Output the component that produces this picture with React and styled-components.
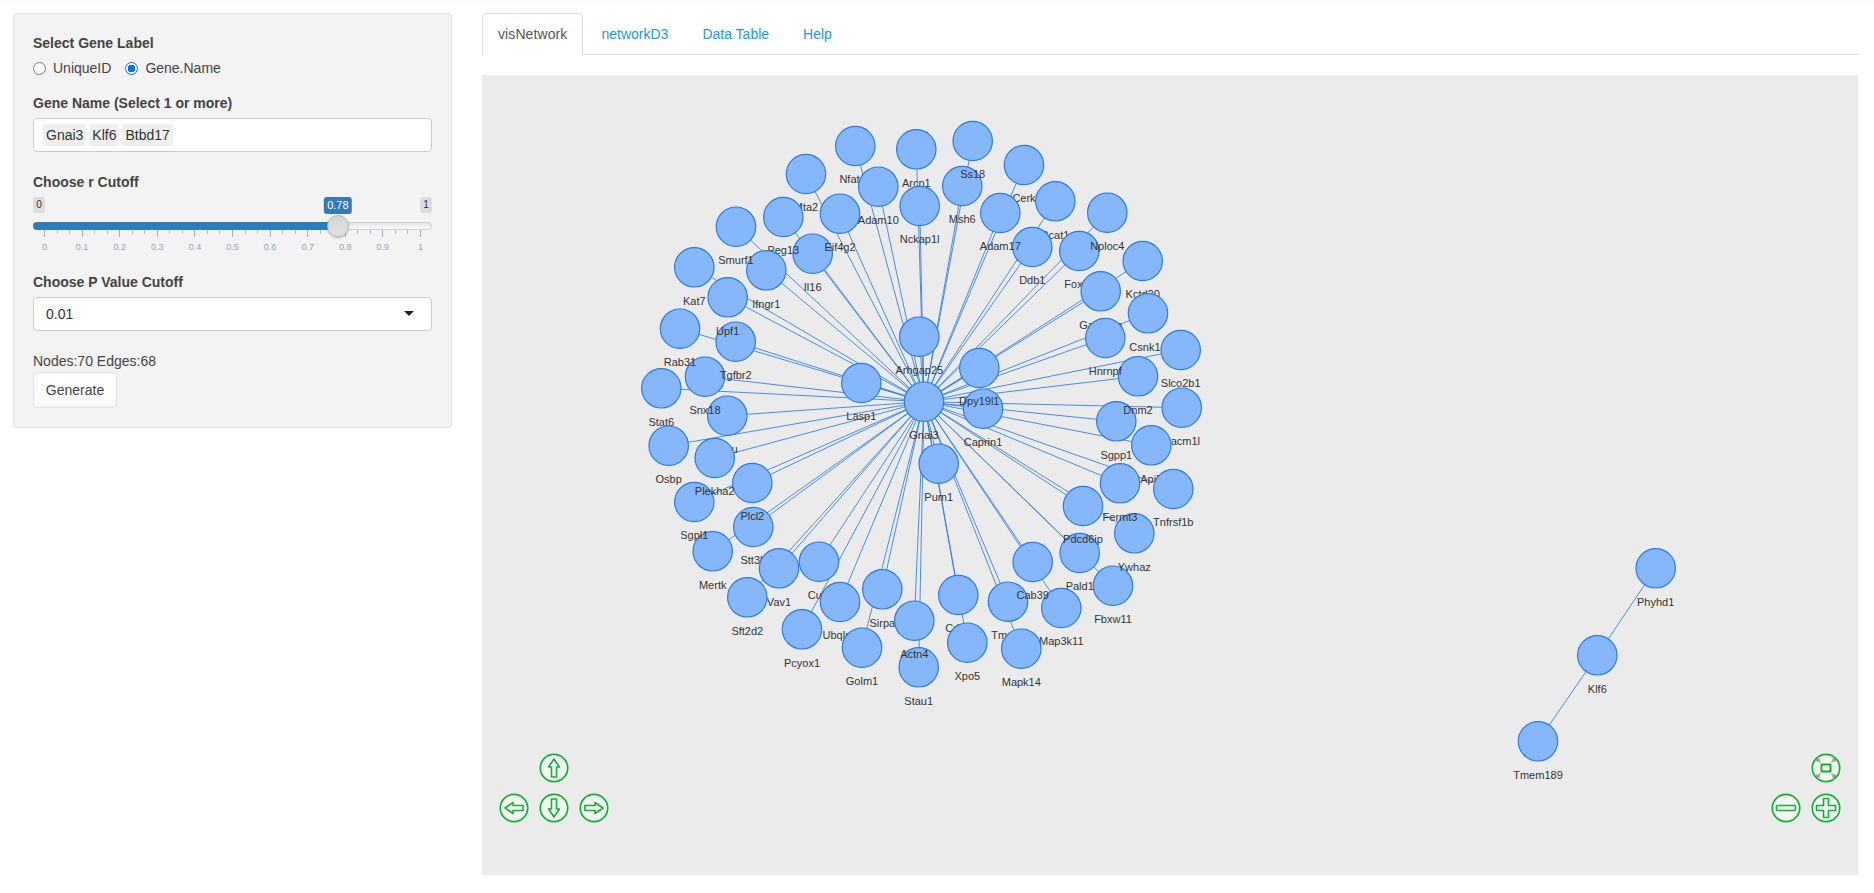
import React from "react"
import styled, { createGlobalStyle } from "styled-components"

const GlobalStyle = createGlobalStyle`
  html, body {
    margin: 0;
    background: #fff;
    color: #333;
    font-family: "Liberation Sans", Arial, sans-serif;
    font-size: 14px;
    line-height: 20px;
  }
`

const HUB = [924, 401.7]

// page coordinates, listed in the order they are painted (later nodes cover earlier labels)
const genes = [
  ["Mta2", 806, 174], ["Il16", 812.7, 253.7], ["Peg13", 783.3, 217], ["Eif4g2", 840, 213.7],
  ["Nfatc1", 855.3, 146], ["Adam10", 878.3, 186.7], ["Arcn1", 916.3, 149.3], ["Nckap1l", 919.7, 206],
  ["Msh6", 962.3, 186], ["Ss18", 972.7, 141], ["Cerk", 1024, 165], ["Bcat1", 1055.3, 201.3],
  ["Ddb1", 1032.3, 247], ["Adam17", 1000.3, 213], ["Foxk1", 1079.3, 251], ["Nploc4", 1107.3, 212.7],
  ["Gabarap", 1100.7, 291.3], ["Kctd20", 1142.7, 261], ["Csnk1e", 1148, 313.3], ["Slco2b1", 1180.7, 350],
  ["Sgpp1", 1116.3, 421.3], ["Dnm2", 1138, 376.3], ["Hnrnpf", 1105.3, 338], ["Sacm1l", 1181.7, 407.7],
  ["Api5", 1151.3, 445.3], ["Tnfrsf1b", 1173.3, 489], ["Fbxw11", 1113, 585.7], ["Ywhaz", 1134.3, 533.3],
  ["Fermt3", 1120, 483.3], ["Pald1", 1079.7, 553], ["Pdcd6ip", 1083, 506], ["Tmco1", 1008, 601.7],
  ["Map3k11", 1061.3, 608], ["Cab39", 1032.7, 562], ["Mapk14", 1021.3, 648.7], ["Cd47", 958.3, 595],
  ["Xpo5", 967.3, 642.7], ["Stau1", 918.7, 667.3], ["Sirpa", 882.3, 589.3], ["Actn4", 914.3, 620.7],
  ["Cul1", 819, 561.7], ["Ubqln1", 840, 602], ["Golm1", 862, 647.7], ["Pcyox1", 802, 629.3],
  ["Stt3b", 753.3, 527], ["Vav1", 779, 568.3], ["Plcl2", 752.3, 483], ["Sft2d2", 747.3, 597.3],
  ["Mertk", 712.7, 551.3], ["Sgpl1", 694.3, 502], ["Gnu", 727.3, 415.7], ["Plekha2", 714.7, 458],
  ["Snx18", 705, 376.7], ["Rab31", 680, 328.7], ["Stat6", 661.3, 388.3], ["Osbp", 668.7, 445.7],
  ["Tgfbr2", 735.7, 341.7], ["Upf1", 727.7, 297.3], ["Kat7", 694.3, 267.3], ["Ifngr1", 766.3, 270.3],
  ["Smurf1", 736, 226.7], ["Lasp1", 861.3, 383], ["Arhgap25", 919.3, 336.7], ["Caprin1", 983, 408.7],
  ["Dpy19l1", 979.3, 368], ["Pum1", 938.7, 463.7],
]

const PHYHD1 = [1655.7, 568.3]
const KLF6 = [1597.3, 655.3]
const TMEM189 = [1538, 741.3]

const nodes = [
  ...genes,
  ["Gnai3", ...HUB],
  ["Phyhd1", ...PHYHD1],
  ["Klf6", ...KLF6],
  ["Tmem189", ...TMEM189],
]

const edges = [
  ...genes.map(([, x, y]) => [HUB, [x, y]]),
  [PHYHD1, KLF6],
  [KLF6, TMEM189],
]

const TICK_COUNT = 31
const TICK_LABELS = ["0", "0.1", "0.2", "0.3", "0.4", "0.5", "0.6", "0.7", "0.8", "0.9", "1"]
const SLIDER_X = 0.78 * 376.4 + 11.3

const NetworkGraph = () => (
  <GraphSvg viewBox="482 75 1376 800">
    {edges.map(([a, b], i) => (
      <EdgeLine key={i} x1={a[0]} y1={a[1]} x2={b[0]} y2={b[1]} />
    ))}
    {nodes.map(([name, x, y]) => (
      <g key={name}>
        <NodeCircle cx={x} cy={y} r="19.7" />
        <NodeLabel x={x} y={y + 33.3}>{name}</NodeLabel>
      </g>
    ))}
  </GraphSvg>
)

const NavIcon = ({ children }) => (
  <NavSvg viewBox="0 0 30 30">
    <circle cx="15" cy="15" r="13.7" fill="#f5f5f5" stroke="#10b232" strokeWidth="1.7" />
    <g fill="none" stroke="#10b232" strokeWidth="1.6" strokeLinejoin="round">{children}</g>
  </NavSvg>
)

const ARROW = "M15 6 L20.5 14 H17.5 V24 H12.5 V14 H9.5 Z"

const Arrow = ({ angle }) => <path d={ARROW} transform={`rotate(${angle} 15 15)`} />

export default function App() {
  return (
    <Page>
      <GlobalStyle />
      <Sidebar>
        <FieldLabel>Select Gene Label</FieldLabel>
        <RadioRow>
          <RadioOption>
            <RadioInput type="radio" name="label" value="UniqueID" />
            UniqueID
          </RadioOption>
          <RadioOption>
            <RadioInput type="radio" name="label" value="Gene.Name" defaultChecked />
            Gene.Name
          </RadioOption>
        </RadioRow>

        <FieldLabel>Gene Name (Select 1 or more)</FieldLabel>
        <ChipInput>
          <Chip>Gnai3</Chip>
          <Chip>Klf6</Chip>
          <Chip>Btbd17</Chip>
        </ChipInput>

        <FieldLabel $gap={20}>Choose r Cutoff</FieldLabel>
        <Slider>
          <SliderEnds>
            <EndBadge>0</EndBadge>
            <EndBadge>1</EndBadge>
          </SliderEnds>
          <ValueBadge style={{ left: `${SLIDER_X}px` }}>0.78</ValueBadge>
          <Track>
            <TrackFill style={{ width: `${SLIDER_X}px` }} />
            <Handle style={{ left: `${SLIDER_X - 1}px` }} />
          </Track>
          <Ticks>
            {Array.from({ length: TICK_COUNT }, (_, i) => (
              <Tick key={i} $major={i % 3 === 0} />
            ))}
          </Ticks>
          <TickLabels>
            {TICK_LABELS.map(t => (
              <TickLabel key={t}><span>{t}</span></TickLabel>
            ))}
          </TickLabels>
        </Slider>

        <FieldLabel $gap={0}>Choose P Value Cutoff</FieldLabel>
        <SelectBox>
          0.01
          <Caret />
        </SelectBox>

        <Stats>Nodes:70 Edges:68</Stats>
        <GenerateButton>Generate</GenerateButton>
      </Sidebar>

      <Main>
        <Tabs>
          <TabItem $active>visNetwork</TabItem>
          <TabItem>networkD3</TabItem>
          <TabItem>Data Table</TabItem>
          <TabItem>Help</TabItem>
        </Tabs>
        <Canvas>
          <NetworkGraph />
          <NavLeft>
            <NavSlot $col={2}>
              <NavIcon><Arrow angle={0} /></NavIcon>
            </NavSlot>
            <NavSlot $col={1}>
              <NavIcon><Arrow angle={-90} /></NavIcon>
            </NavSlot>
            <NavSlot $col={2}>
              <NavIcon><Arrow angle={180} /></NavIcon>
            </NavSlot>
            <NavSlot $col={3}>
              <NavIcon><Arrow angle={90} /></NavIcon>
            </NavSlot>
          </NavLeft>
          <NavRight>
            <NavSlot $col={2}>
              <NavIcon>
                <path
                  d="M6 6 L9.5 9.5 M6 6 H9 M6 6 V9 M24 6 L20.5 9.5 M24 6 H21 M24 6 V9 M6 24 L9.5 20.5 M6 24 H9 M6 24 V21 M24 24 L20.5 20.5 M24 24 H21 M24 24 V21"
                  stroke="#8a8a8a"
                  strokeWidth="1.1"
                />
                <rect x="10.5" y="11.5" width="9" height="7" strokeWidth="2" />
              </NavIcon>
            </NavSlot>
            <NavSlot $col={1}>
              <NavIcon>
                <rect x="5.5" y="12.5" width="19" height="5" rx="1.5" />
              </NavIcon>
            </NavSlot>
            <NavSlot $col={2}>
              <NavIcon>
                <path d="M12.5 5.5 H17.5 V12.5 H24.5 V17.5 H17.5 V24.5 H12.5 V17.5 H5.5 V12.5 H12.5 Z" />
              </NavIcon>
            </NavSlot>
          </NavRight>
        </Canvas>
      </Main>
    </Page>
  )
}

const Page = styled.div`
  display: flex;
  align-items: flex-start;
  gap: 30px;
  padding: 12px 16px 0 13px;
  border-top: 1px solid #f9f9f9;
`

const Sidebar = styled.div`
  box-sizing: border-box;
  flex: 0 0 439px;
  padding: 19px;
  background: #f3f3f3;
  border: 1px solid #e0e0e0;
  border-radius: 4px;
`

const FieldLabel = styled.div`
  font-weight: 700;
  margin-top: ${p => p.$gap ?? 15}px;
  margin-bottom: 5px;
  color: #444;

  &:first-child {
    margin-top: 0;
  }
`

const RadioRow = styled.div`
  display: flex;
  gap: 14px;
  height: 20px;
`

const RadioOption = styled.label`
  display: flex;
  align-items: center;
  gap: 7px;
  color: #444;
`

const RadioInput = styled.input`
  appearance: none;
  box-sizing: border-box;
  width: 13px;
  height: 13px;
  margin: 0;
  border: 1px solid #767676;
  border-radius: 50%;
  background: #fff;

  &:checked {
    border: 1.5px solid #0a6ff0;
    background: radial-gradient(circle, #0a6ff0 0 3.6px, #fff 4px);
  }
`

const ChipInput = styled.div`
  box-sizing: border-box;
  display: flex;
  align-items: center;
  gap: 3px;
  height: 34px;
  padding: 0 9px;
  background: #fff;
  border: 1px solid #ccc;
  border-radius: 4px;
`

const Chip = styled.span`
  padding: 1px 3px;
  background: #efefef;
  border-radius: 3px;
  color: #333;
`

const Slider = styled.div`
  position: relative;
  height: 75px;
`

const SliderEnds = styled.div`
  display: flex;
  justify-content: space-between;
`

const EndBadge = styled.span`
  min-width: 12px;
  height: 16px;
  background: #ddd;
  border-radius: 3px;
  color: #333;
  font-size: 10px;
  line-height: 15px;
  text-align: center;
`

const ValueBadge = styled.span`
  position: absolute;
  top: 0;
  transform: translateX(-50%);
  padding: 0 3.5px;
  height: 17px;
  background: #337ab7;
  border-radius: 3px;
  color: #fff;
  font-size: 11px;
  line-height: 17px;
`

const Track = styled.div`
  position: relative;
  box-sizing: border-box;
  height: 8px;
  margin-top: 9px;
  background: linear-gradient(#e4e4e4, #fff);
  border: 1px solid #cfcfcf;
  border-radius: 4px;
`

const TrackFill = styled.div`
  position: absolute;
  top: -1px;
  left: -1px;
  height: 8px;
  background: #2f7cbd;
  border-radius: 4px 0 0 4px;
`

const Handle = styled.div`
  position: absolute;
  top: 3px;
  box-sizing: border-box;
  width: 22px;
  height: 22px;
  transform: translate(-50%, -50%);
  background: linear-gradient(#d4d4d4, #e2e2e2);
  border: 1px solid #b8b8b8;
  border-radius: 50%;
  box-shadow: 0 1px 2px rgba(0, 0, 0, 0.25);
`

const Ticks = styled.div`
  display: flex;
  justify-content: space-between;
  align-items: flex-start;
  height: 7px;
  padding: 0 11px;
`

const Tick = styled.span`
  width: 1px;
  height: ${p => (p.$major ? 7 : 4)}px;
  background: ${p => (p.$major ? "#9db4c6" : "#b5c0c9")};
`

const TickLabels = styled.div`
  display: flex;
  justify-content: space-between;
  padding: 0 11px;
  margin-top: 4px;
`

const TickLabel = styled.span`
  display: flex;
  justify-content: center;
  width: 1px;
  color: #94a6b5;
  font-size: 9px;
  line-height: 12px;
`

const SelectBox = styled.div`
  position: relative;
  box-sizing: border-box;
  display: flex;
  align-items: center;
  height: 34px;
  padding: 0 12px;
  background: #fff;
  border: 1px solid #ccc;
  border-radius: 4px;
`

const Caret = styled.span`
  position: absolute;
  right: 17px;
  top: 13px;
  border-top: 5px solid #222;
  border-left: 5px solid transparent;
  border-right: 5px solid transparent;
`

const Stats = styled.div`
  margin-top: 20px;
  margin-bottom: 1px;
  color: #444;
`

const GenerateButton = styled.button`
  box-sizing: border-box;
  display: block;
  height: 36px;
  width: 84px;
  background: linear-gradient(#fff 70%, #f6f6f6);
  border: 1px solid #e4e4e4;
  border-radius: 4px;
  color: #444;
  font: inherit;
`

const Main = styled.div`
  flex: 1;
  min-width: 0;
`

const Tabs = styled.div`
  display: flex;
  height: 41px;
  gap: 2px;
  margin-bottom: 20px;
  border-bottom: 1px solid #ddd;
`

const TabItem = styled.a`
  box-sizing: border-box;
  height: 42px;
  padding: 10px 15px;
  border: 1px solid ${p => (p.$active ? "#ddd" : "transparent")};
  border-bottom-color: ${p => (p.$active ? "#fff" : "transparent")};
  border-radius: 4px 4px 0 0;
  background: ${p => (p.$active ? "#fff" : "transparent")};
  color: ${p => (p.$active ? "#555" : "#149be0")};
  letter-spacing: ${p => (p.$active ? "0.1px" : "0")};
`

const Canvas = styled.div`
  position: relative;
  height: 800px;
  background: #ebebeb;
`

const GraphSvg = styled.svg`
  display: block;
  width: 100%;
  height: 100%;
`

const EdgeLine = styled.line`
  stroke: #2b7ce9;
  stroke-width: 1;
  stroke-opacity: 0.85;
`

const NodeCircle = styled.circle`
  fill: #85b7fa;
  stroke: #2b7ce9;
  stroke-width: 1.2;
`

const NodeLabel = styled.text`
  fill: #343434;
  font-family: "Liberation Sans", Arial, sans-serif;
  font-size: 11px;
  text-anchor: middle;
  dominant-baseline: central;
`

const NavGroup = styled.div`
  position: absolute;
  bottom: 52px;
  display: grid;
  grid-template-columns: repeat(3, 30px);
  grid-auto-rows: 30px;
  gap: 10px;
`

const NavLeft = styled(NavGroup)`
  left: 16.5px;
`

const NavRight = styled(NavGroup)`
  right: 17px;
  grid-template-columns: repeat(2, 30px);
`

const NavSlot = styled.div`
  grid-column: ${p => p.$col};
  width: 30px;
  height: 30px;
`

const NavSvg = styled.svg`
  display: block;
  width: 30px;
  height: 30px;
`
